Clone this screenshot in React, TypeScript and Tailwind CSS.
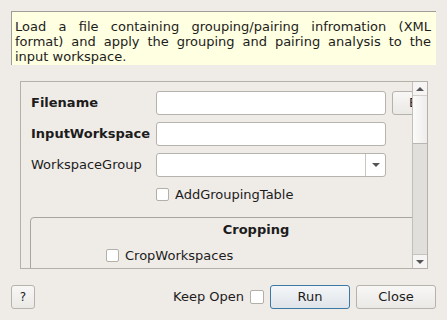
import React from 'react';

const font = { fontFamily: '"DejaVu Sans", Verdana, sans-serif' };

function Checkbox() {
  return <div className="w-[13px] h-[13px] bg-white border border-[#b3afa9] rounded-[2px] shrink-0" />;
}

function TextBox() {
  return <div className="w-[230px] h-[24px] bg-white border border-[#b6b2ac] rounded-[3px]" />;
}

export default function App() {
  return (
    <div className="w-[447px] h-[320px] bg-[#efebe7] text-[13px] text-[#1c1c1c] overflow-hidden flex flex-col" style={font}>
      {/* Description */}
      <div className="ml-[11px] mt-[11px] w-[425px] h-[54px] bg-[#ffffe1] border-l border-t border-[#a09d98] pl-[3px] pr-[5px] pt-[7px] leading-[15px] text-justify">
        Load a file containing grouping/pairing infromation (XML format) and apply the grouping and pairing analysis to the input workspace.
      </div>

      {/* Scroll area */}
      <div className="ml-[20px] mt-[16px] w-[408px] h-[188px] border border-[#b4b0aa] flex">
        <div className="flex-1 overflow-hidden">
          <div className="w-[500px] pl-[10px] pt-[9px] flex flex-col">
            <div className="grid grid-cols-[119px_230px_auto] gap-x-[6px] gap-y-[7px] items-center">
              <span className="font-bold">Filename</span>
              <TextBox />
              <div className="w-[60px] h-[24px] rounded-[3px] border border-[#b6b2ac] bg-gradient-to-b from-[#f8f7f6] to-[#ebe9e6] pl-[16px] leading-[22px]">Browse</div>
              <span className="font-bold">InputWorkspace</span>
              <TextBox />
              <div />
              <span>WorkspaceGroup</span>
              <div className="w-[230px] h-[24px] bg-white border border-[#b6b2ac] rounded-[3px] flex justify-end">
                <div className="w-[20px] h-full border-l border-[#c9c5bf] flex items-center justify-center">
                  <div className="w-0 h-0 border-l-[4px] border-r-[4px] border-t-[4px] border-l-transparent border-r-transparent border-t-[#555]" />
                </div>
              </div>
              <div />
            </div>
            <div className="flex items-center gap-[6px] ml-[125px] mt-[11px] h-[13px]">
              <Checkbox />
              <span>AddGroupingTable</span>
            </div>
            <div className="mt-[16px] -ml-[1px] w-[452px] h-[80px] border border-[#a8a49e] rounded-[4px]">
              <div className="text-center font-bold mt-[4px] leading-[15px]">Cropping</div>
              <div className="flex items-center gap-[6px] ml-[75px] mt-[9px]">
                <Checkbox />
                <span>CropWorkspaces</span>
              </div>
            </div>
          </div>
        </div>
        {/* Scrollbar */}
        <div className="w-[15px] border-l border-[#c2beb9] flex flex-col bg-[#e1dfdc]">
          <div className="h-[14px] bg-[#f6f5f4] border-b border-[#d4d1cd] flex items-center justify-center">
            <div className="w-0 h-0 border-l-[4px] border-r-[4px] border-b-[4px] border-l-transparent border-r-transparent border-b-[#555]" />
          </div>
          <div className="h-[48px] bg-gradient-to-r from-[#fbfbfa] to-[#efedeb] border-b border-[#b9b5b0]" />
          <div className="flex-1" />
          <div className="h-[14px] bg-[#f6f5f4] border-t border-[#c6c2bd] flex items-center justify-center">
            <div className="w-0 h-0 border-l-[4px] border-r-[4px] border-t-[4px] border-l-transparent border-r-transparent border-t-[#555]" />
          </div>
        </div>
      </div>

      {/* Bottom bar */}
      <div className="mt-[16px] ml-[11px] w-[425px] h-[24px] flex items-center">
        <div className="w-[24px] h-[24px] rounded-[3px] border border-[#b6b2ac] bg-gradient-to-b from-[#f8f7f6] to-[#ebe9e6] flex items-center justify-center text-[12px]">?</div>
        <div className="flex-1" />
        <span className="mr-[6px]">Keep Open</span>
        <div className="w-[14px] h-[14px] bg-white border border-[#b3afa9] rounded-[2px] mr-[6px]" />
        <div className="w-[80px] h-[24px] rounded-[3px] border border-[#3b78a6] bg-gradient-to-b from-[#f4f6f8] to-[#dfe4e9] flex items-center justify-center">Run</div>
        <div className="w-[80px] h-[24px] ml-[6px] rounded-[3px] border border-[#b6b2ac] bg-gradient-to-b from-[#f8f7f6] to-[#ebe9e6] flex items-center justify-center">Close</div>
      </div>
    </div>
  );
}
